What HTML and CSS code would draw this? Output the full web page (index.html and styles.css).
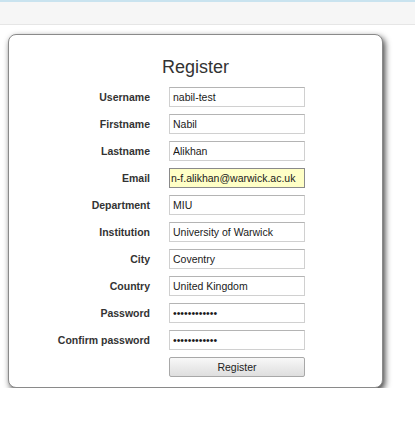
FILE: index.html
```html
<!DOCTYPE html>
<html lang="en">
<head>
    <title>Register</title>
    <link rel="stylesheet" href="styles.css">
</head>
<body>

<!-- Top bar -->
<div class="top-bar"></div>

<!-- Register card -->
<div class="card">
    <h2 class="card-title">Register</h2>
    <form class="register-form">
        <label for="username">Username</label>
        <input type="text" id="username" value="nabil-test">

        <label for="firstname">Firstname</label>
        <input type="text" id="firstname" value="Nabil">

        <label for="lastname">Lastname</label>
        <input type="text" id="lastname" value="Alikhan">

        <label for="email">Email</label>
        <input type="text" id="email" class="filled" value="n-f.alikhan@warwick.ac.uk">

        <label for="department">Department</label>
        <input type="text" id="department" value="MIU">

        <label for="institution">Institution</label>
        <input type="text" id="institution" value="University of Warwick">

        <label for="city">City</label>
        <input type="text" id="city" value="Coventry">

        <label for="country">Country</label>
        <input type="text" id="country" value="United Kingdom">

        <label for="password">Password</label>
        <input type="password" id="password" value="nabiltest123">

        <label for="confirm">Confirm password</label>
        <input type="password" id="confirm" value="nabiltest123">

        <span></span>
        <button type="button" class="btn">Register</button>
    </form>
</div>

</body>
</html>
```

FILE: styles.css
```css
/* Reset */
* {
    margin: 0;
    padding: 0;
    box-sizing: border-box;
}

body {
    background: #fff;
    font-family: "Liberation Sans", Arial, sans-serif;
    color: #333;
}

/* Grey strip at the top */
.top-bar {
    height: 25px;
    background: #f6f6f6;
    border-top: 2px solid #c9e3ef;
    border-bottom: 1px solid #e6e6e6;
}

/* Card */
.card {
    width: 375px;
    height: 354px;
    margin: 9px 0 0 8px;
    background: #fff;
    border: 1px solid #8a8a8a;
    border-radius: 8px;
    box-shadow: 2px 3px 6px rgba(0, 0, 0, 0.75);
    padding-top: 21px;
}

.card-title {
    font-size: 18px;
    font-weight: normal;
    line-height: 22px;
    text-align: center;
    color: #333;
    margin-bottom: 9px;
}

/* Form grid: labels on the left, fields on the right */
.register-form {
    display: grid;
    grid-template-columns: 141px 136px;
    column-gap: 19px;
    row-gap: 7px;
    align-items: center;
}

.register-form label {
    text-align: right;
    font-size: 10.5px;
    font-weight: bold;
    color: #333;
}

.register-form input {
    height: 20px;
    padding: 0 3px;
    font-family: "Liberation Sans", Arial, sans-serif;
    font-size: 10.5px;
    color: #1a1a1a;
    background: #fff;
    border: 1px solid #d0d0d0;
    border-top-color: #b4b4b4;
    outline: none;
}

.register-form input.filled {
    padding-left: 1px;
    background: #ffffc6;
    border-color: #8a8a8a;
}

.btn {
    height: 20px;
    font-family: "Liberation Sans", Arial, sans-serif;
    font-size: 10.5px;
    color: #222;
    background: linear-gradient(#f8f8f8, #dedede);
    border: 1px solid #a8a8a8;
    border-radius: 2px;
    cursor: pointer;
}
```
